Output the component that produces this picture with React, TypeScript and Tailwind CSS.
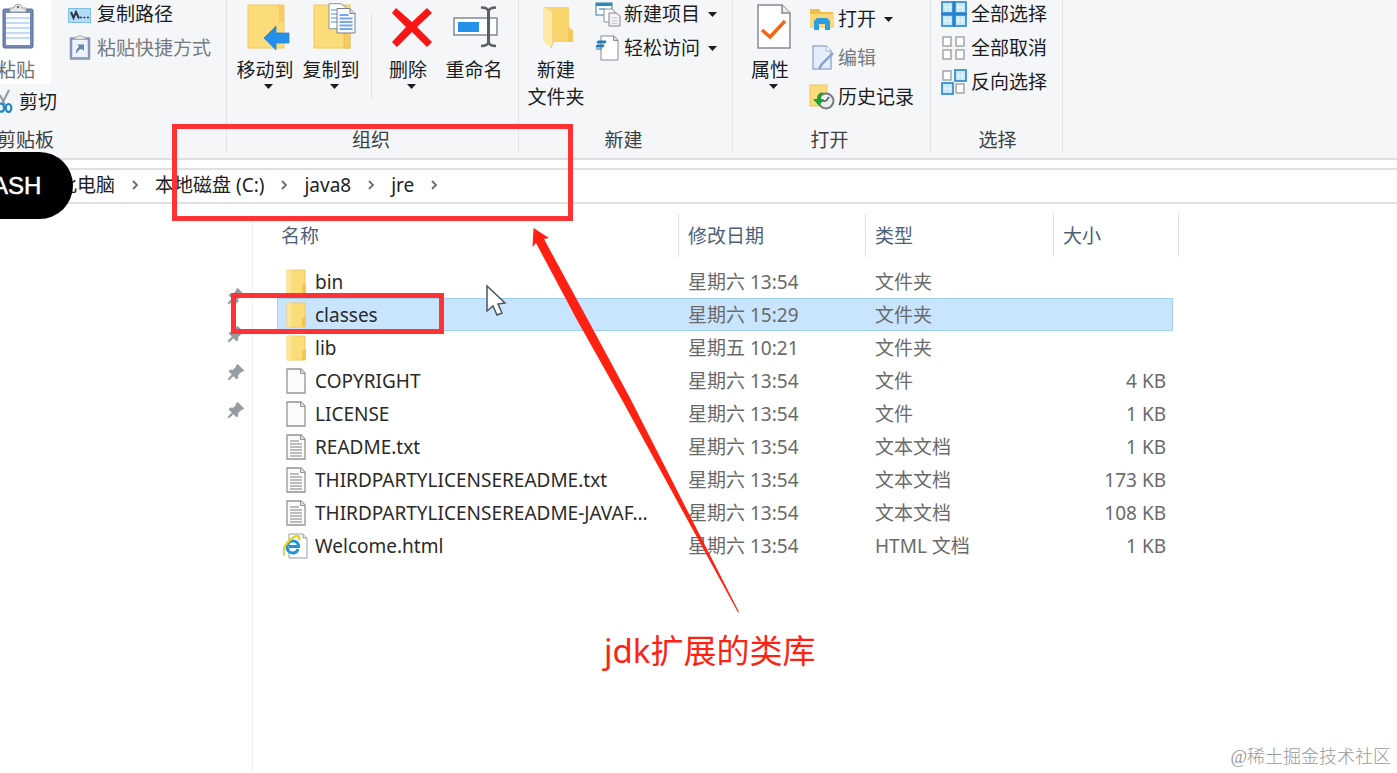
import type { ReactNode } from "react";
import { BsPinAngleFill } from "react-icons/bs";

/* ---------- ribbon icons ---------- */

const ClipboardIcon = () => (
  <svg width="32" height="47" viewBox="0 0 32 47" aria-hidden="true">
    <rect x="1" y="6" width="30" height="39" rx="1.5" fill="#7388b5" stroke="#566c9c" />
    <rect x="4" y="10" width="24" height="32" fill="#fafcff" />
    <path d="M4 15h24M4 20h24M4 25h24M4 30h24M4 35h24" stroke="#c3dbf5" strokeWidth="2" />
    <path d="M8 9V5h4c0-5 8-5 8 0h4v4z" fill="#e8e9ea" stroke="#9c9fa3" />
    <circle cx="16" cy="4" r="1.3" fill="#777" />
  </svg>
);

const ScissorsIcon = () => (
  <svg width="13" height="26" viewBox="0 0 13 26" className="shrink-0" aria-hidden="true">
    <path d="M9 1 2 15M0 6l5 10" stroke="#9199a1" strokeWidth="2" fill="none" />
    <ellipse cx="8.500" cy="19" rx="2.800" ry="4" fill="none" stroke="#1d87c9" strokeWidth="2.200" />
    <path d="M-1 15c3-1 5 0 5 4s-2 4-5 3" fill="none" stroke="#1d87c9" strokeWidth="2.200" />
  </svg>
);

const CopyPathIcon = () => (
  <svg width="24" height="24" viewBox="0 0 24 24" aria-hidden="true">
    <rect x=".5" y="6.500" width="22" height="14" fill="#b5dcf6" stroke="#7fbce6" />
    <path d="M3 10l2.500 6L8 10l3 6.500" stroke="#27384a" strokeWidth="2" fill="none" />
    <path d="M12 15.500h2M15.500 15.500h2M19 15.500h2" stroke="#27384a" strokeWidth="1.500" />
  </svg>
);

const PasteShortcutIcon = () => (
  <svg width="24" height="26" viewBox="0 0 24 26" aria-hidden="true">
    <rect x="3" y="3.500" width="18" height="20" fill="#edf3fb" stroke="#8797ba" strokeWidth="2.500" />
    <path d="M7 4.500V2h3c0-2 4-2 4 0h3v2.500z" fill="#e4e6e8" stroke="#a6abb3" />
    <path d="M8 18c0-3 1-5 3-6L9.500 9.500H16V16l-2-2c-2 0-4 1-5 4z" fill="#6a84b5" />
  </svg>
);

const MoveToIcon = () => (
  <svg width="44" height="48" viewBox="0 0 44 48" aria-hidden="true">
    <rect x="1" y="2" width="36" height="43" fill="#fbdc78" stroke="#efc95e" />
    <path d="M32 2h5v17h-5z" fill="#f4ca62" />
    <path d="M17 35l12-12v7h13v10H29v7z" fill="#2490ea" stroke="#2280cf" strokeWidth=".7" />
  </svg>
);

const CopyToIcon = () => (
  <svg width="44" height="48" viewBox="0 0 44 48" aria-hidden="true">
    <rect x="1" y="2" width="36" height="43" fill="#fbdc78" stroke="#efc95e" />
    <path d="M31 24h6v21h-6z" fill="#f4cd66" stroke="#e2b647" strokeWidth=".7" />
    <path d="M16 .7h12l5 4v21H16z" fill="#fff" stroke="#8f949b" />
    <path d="M18 7h8M18 11h8M18 15h8M18 19h8" stroke="#90b5e9" strokeWidth="1.500" />
    <path d="M24 5.500h13l5 5V30H24z" fill="#f7fbff" stroke="#7a7e84" />
    <path d="M37 5.500v5h5" fill="#ddd" stroke="#7a7e84" />
    <path d="M26.500 12h9M26.500 15.500h13M26.500 19h13M26.500 22.500h13M26.500 26h13" stroke="#7aa7e8" strokeWidth="1.800" />
  </svg>
);

const DeleteIcon = () => (
  <svg width="42" height="48" viewBox="0 0 42 48" aria-hidden="true">
    <path d="M5 5l16 14L36 5l5 5-15 14 15 15-5 5-15-15L6 44l-5-5 14-15L1 10z" fill="#f81515" />
  </svg>
);

const RenameIcon = () => (
  <svg width="46" height="48" viewBox="0 0 46 48" aria-hidden="true">
    <rect x="1" y="15" width="43" height="17" fill="#fff" stroke="#858b91" strokeWidth="1.500" />
    <rect x="5" y="19" width="21" height="10" fill="#2491ea" />
    <path d="M35.500 7v34" stroke="#5b6065" strokeWidth="3" />
    <path d="M28 4.500c5 0 7 1 7.500 4 .5-3 2.500-4 7.500-4M28 43c5 0 7-1 7.500-4 .5 3 2.500 4 7.500 4" fill="none" stroke="#5b6065" strokeWidth="2.500" />
  </svg>
);

const NewFolderIcon = () => (
  <svg width="32" height="44" viewBox="0 0 32 44" aria-hidden="true">
    <path d="M2 2h25v21l4 3v11H9z" fill="#f9d36c" />
    <path d="M27 22l4 4v11h-5V23z" fill="#f6c95a" />
    <path d="M1 2l10 5v30l-2 6-8-7z" fill="#ffe9a6" />
    <path d="M11 7v30l-2 6" fill="none" stroke="#f1c75d" />
  </svg>
);

const NewItemIcon = () => (
  <svg width="26" height="26" viewBox="0 0 26 26" aria-hidden="true">
    <rect x="1" y="2" width="16" height="12" fill="#fff" stroke="#2f7fa8" />
    <path d="M1 3.500h16" stroke="#2f8abb" strokeWidth="3" />
    <path d="M4 8h6" stroke="#74bde4" strokeWidth="2" />
    <path d="M9 8h8l3 3v10H9z" fill="#fff" stroke="#8a8f95" />
    <path d="M14 12h7l4 3v10H14z" fill="#f3f5f9" stroke="#8a8088" />
    <path d="M16.500 17h6M16.500 20h6M16.500 22.500h6" stroke="#bfc7e0" />
  </svg>
);

const EasyAccessIcon = () => (
  <svg width="26" height="26" viewBox="0 0 26 26" aria-hidden="true">
    <path d="M6 1h13l4 4v20H6z" fill="#fff" stroke="#858b93" />
    <path d="M18.500 1v4.500H23" fill="#d6d8da" stroke="#858b93" />
    <path d="M3 6h8l-1 2H2zM2 10h7l-1 2H1zM1 14h6" fill="#2679bb" stroke="#2679bb" />
  </svg>
);

const PropertiesIcon = () => (
  <svg width="34" height="46" viewBox="0 0 34 46" aria-hidden="true">
    <path d="M1 1h24l8 8v35H1z" fill="#fff" stroke="#878a8e" strokeWidth="1.500" />
    <path d="M25 1v8h8" fill="#eceded" stroke="#878a8e" strokeWidth="1.500" />
    <path d="M5 26l8 7 15-16" fill="none" stroke="#f36618" strokeWidth="3.500" />
  </svg>
);

const OpenIcon = () => (
  <svg width="26" height="26" viewBox="0 0 26 26" aria-hidden="true">
    <path d="M1 3h9l2 3h12v4H1z" fill="#f0bf45" />
    <path d="M1 8h24v14H1z" fill="#fbd978" />
    <path d="M5 24v-9l3-3h10l3 3v9h-5v-6h-6v6z" fill="#2a9ee3" />
  </svg>
);

const EditIcon = () => (
  <svg width="26" height="28" viewBox="0 0 26 28" aria-hidden="true">
    <path d="M4 2h13l5 5v18H4z" fill="#e4edfa" stroke="#9eafce" strokeWidth="1.500" />
    <path d="M17 2v5h5" fill="#fff" stroke="#9eafce" />
    <path d="M24 9L13 20l-3 5" stroke="#8da4c9" strokeWidth="2.500" fill="none" />
  </svg>
);

const HistoryIcon = () => (
  <svg width="26" height="26" viewBox="0 0 26 26" aria-hidden="true">
    <path d="M1 1h17v21H1z" fill="#fbdc78" stroke="#eac65b" />
    <circle cx="17" cy="17" r="7.500" fill="#eceeef" stroke="#777c81" strokeWidth="2" />
    <path d="M17 17l3-4M17 17h-4" stroke="#555" strokeWidth="1.500" />
    <path d="M14 8C9 9 8 12 8 15H4l6 7 5-7h-3c0-3 1-4 2-7z" fill="#21a038" />
  </svg>
);

type SquareTone = "on" | "off";

const squareLayout: [number, number][] = [
  [1, 1],
  [14, 1],
  [1, 14],
  [14, 14],
];

const SelectionIcon = ({ tones }: { tones: SquareTone[] }) => (
  <svg width="26" height="26" viewBox="0 0 26 26" aria-hidden="true">
    {squareLayout.map(([x, y], i) =>
      tones[i] === "on" ? (
        <g key={i}>
          <rect x={x} y={y} width="11" height="11" fill="#c5e7fd" stroke="#3a90d4" strokeWidth="1.800" />
          <path d={`M${x + 3.5} ${y + 2}v7M${x + 7.5} ${y + 2}v7M${x + 2} ${y + 5.5}h7`} stroke="#e8f7ff" />
        </g>
      ) : (
        <rect key={i} x={x + 1} y={y + 1} width="8" height="9" fill="#fff" stroke="#969a9e" strokeWidth="1.300" />
      ),
    )}
    {tones.every((tone) => tone === "on") && <path d="M13 0v26M0 13h26" stroke="#2482cd" strokeWidth="2" />}
  </svg>
);

/* ---------- ribbon parts ---------- */

const Caret = () => (
  <svg width="9" height="5" viewBox="0 0 9 5" aria-hidden="true">
    <path d="M0 0h9L4.500 5z" fill="#1c1c1c" />
  </svg>
);

function BigButton({ icon, lines, caret }: { icon: ReactNode; lines: string[]; caret?: boolean }) {
  return (
    <button type="button" className="flex w-[66px] shrink-0 flex-col items-center">
      <span className={`flex h-[57px] items-center justify-center pb-1 ${caret ? "pl-2" : "pl-1"}`}>{icon}</span>
      {lines.map((line) => (
        <span key={line} className="whitespace-nowrap leading-[27px]">
          {line}
        </span>
      ))}
      {caret && (
        <span className="pl-[7px]">
          <Caret />
        </span>
      )}
    </button>
  );
}

function SmallButton({
  icon,
  label,
  caret,
  disabled,
  roomy,
}: {
  icon: ReactNode;
  label: string;
  caret?: boolean;
  disabled?: boolean;
  roomy?: boolean;
}) {
  return (
    <button
      type="button"
      disabled={disabled}
      className={`flex h-7 items-center whitespace-nowrap disabled:text-[#777a7e] ${roomy ? "gap-1" : "gap-[3px]"}`}
    >
      <span className="flex w-[26px] shrink-0 justify-center">{icon}</span>
      <span>{label}</span>
      {caret && (
        <span className="pl-[5px]">
          <Caret />
        </span>
      )}
    </button>
  );
}

function Group({ label, className, children }: { label: string; className: string; children: ReactNode }) {
  return (
    <section aria-label={label} className={`flex shrink-0 flex-col border-r border-[#e2e4e6] ${className}`}>
      <div className="flex h-[125px]">{children}</div>
      <div className="h-7 pr-2 text-center leading-[30px] text-[#3c3f43]">{label}</div>
    </section>
  );
}

function Ribbon() {
  return (
    <header className="flex h-[160px] overflow-hidden border-b-2 border-[#dcdee0] bg-[#f4f6f8] pb-[5px] text-[#1a1c1f]">
      <section aria-label="剪贴板" className="flex w-[227px] shrink-0 flex-col border-r border-[#e2e4e6]">
        <div className="flex h-[125px] gap-[10px]">
          <div className="flex w-[57px] shrink-0 flex-col items-start">
            <button type="button" className="flex h-[84px] w-[51px] flex-col items-start bg-white text-[#6d7074]">
              <span className="flex h-[57px] items-center pb-1 pl-[2px]">
                <ClipboardIcon />
              </span>
              <span className="-ml-[3px] leading-[27px]">粘贴</span>
            </button>
            <button type="button" className="flex h-[35px] items-center gap-[6px] whitespace-nowrap">
              <ScissorsIcon />
              剪切
            </button>
          </div>
          <div className="flex flex-col items-start gap-[6px]">
            <SmallButton icon={<CopyPathIcon />} label="复制路径" roomy />
            <SmallButton icon={<PasteShortcutIcon />} label="粘贴快捷方式" disabled roomy />
          </div>
        </div>
        <div className="-ml-[3px] h-7 leading-[30px] text-[#3c3f43]">剪贴板</div>
      </section>

      <Group label="组织" className="w-[292px] pl-[5px]">
        <BigButton icon={<MoveToIcon />} lines={["移动到"]} caret />
        <BigButton icon={<CopyToIcon />} lines={["复制到"]} caret />
        <div className="ml-[7px] mr-[3px] mt-[14px] h-[86px] w-px shrink-0 bg-[#dfe1e3]" />
        <BigButton icon={<DeleteIcon />} lines={["删除"]} caret />
        <BigButton icon={<RenameIcon />} lines={["重命名"]} />
      </Group>

      <Group label="新建" className="w-[214px] pl-1">
        <BigButton icon={<NewFolderIcon />} lines={["新建", "文件夹"]} />
        <div className="flex flex-col items-start gap-[6px] pl-[6px]">
          <SmallButton icon={<NewItemIcon />} label="新建项目" caret />
          <SmallButton icon={<EasyAccessIcon />} label="轻松访问" caret />
        </div>
      </Group>

      <Group label="打开" className="w-[198px] pl-1">
        <BigButton icon={<PropertiesIcon />} lines={["属性"]} caret />
        <div className="flex flex-col items-start gap-[11px] pl-[6px] pt-[5px]">
          <SmallButton icon={<OpenIcon />} label="打开" caret />
          <SmallButton icon={<EditIcon />} label="编辑" disabled />
          <SmallButton icon={<HistoryIcon />} label="历史记录" />
        </div>
      </Group>

      <Group label="选择" className="w-[132px] pl-[10px]">
        <div className="flex flex-col items-start gap-[6px]">
          <SmallButton icon={<SelectionIcon tones={["on", "on", "on", "on"]} />} label="全部选择" roomy />
          <SmallButton icon={<SelectionIcon tones={["off", "off", "off", "off"]} />} label="全部取消" roomy />
          <SmallButton icon={<SelectionIcon tones={["off", "on", "on", "off"]} />} label="反向选择" roomy />
        </div>
      </Group>
    </header>
  );
}

/* ---------- address bar ---------- */

const crumbs = ["此电脑", "本地磁盘 (C:)", "java8", "jre"];

function AddressBar() {
  return (
    <nav
      aria-label="地址"
      className="mt-2 flex h-[36px] items-center border-y-2 border-[#e0e0e0] pb-[2px] pl-[58px] text-[#222]"
    >
      {crumbs.map((crumb) => (
        <span key={crumb} className="flex items-center">
          <a href="#" className="whitespace-nowrap">
            {crumb}
          </a>
          <svg width="8" height="10" viewBox="0 0 8 10" className="mx-4" aria-hidden="true">
            <path d="M2 1l4 4-4 4" fill="none" stroke="#6d6d6d" strokeWidth="1.800" />
          </svg>
        </span>
      ))}
    </nav>
  );
}

/* ---------- file list ---------- */

type FileKind = "folder" | "blank" | "text" | "html";

function FileIcon({ kind }: { kind: FileKind }) {
  if (kind === "folder") {
    return (
      <svg width="26" height="26" viewBox="0 0 26 26" aria-hidden="true">
        <path d="M4 1h18v24H4z" fill="#fbdc7b" stroke="#f0cb60" />
        <path d="M19 16l4-2v11h-4z" fill="#f5c64f" />
        <path d="M4 1h4v24H4z" fill="#fde596" />
      </svg>
    );
  }
  if (kind === "html") {
    return (
      <svg width="26" height="26" viewBox="0 0 26 26" aria-hidden="true">
        <path d="M6 1h14l4 4v20H6z" fill="#fff" stroke="#9a9da0" />
        <path d="M20 1v4h4" fill="#e9e9e9" stroke="#9a9da0" />
        <path d="M15 16c-1 3-3 4-5 4-3.500 0-6-2.500-6-6s2.500-6 6-6 5.500 2.300 5.500 5.500H6" fill="none" stroke="#1e93dc" strokeWidth="3" />
        <path d="M2 22c-5-3 2-14 9-18 4-2 6-1 5 3" fill="none" stroke="#e8d02d" strokeWidth="2.500" />
      </svg>
    );
  }
  return (
    <svg width="26" height="26" viewBox="0 0 26 26" aria-hidden="true">
      <path d="M4 1h14l4 4v20H4z" fill="#fbfbfb" stroke="#929496" strokeWidth="1.300" />
      <path d="M17.500 1v4.500H22" fill="#e2e2e2" stroke="#929496" />
      {kind === "text" && (
        <path d="M7 7h9M7 10h12M7 13h12M7 16h12M7 19h12M7 22h12" stroke="#a6a8aa" strokeWidth="1.300" />
      )}
    </svg>
  );
}

interface FileRow {
  name: string;
  kind: FileKind;
  modified: string;
  type: string;
  size?: string;
  selected?: boolean;
}

const files: FileRow[] = [
  { name: "bin", kind: "folder", modified: "星期六 13:54", type: "文件夹" },
  { name: "classes", kind: "folder", modified: "星期六 15:29", type: "文件夹", selected: true },
  { name: "lib", kind: "folder", modified: "星期五 10:21", type: "文件夹" },
  { name: "COPYRIGHT", kind: "blank", modified: "星期六 13:54", type: "文件", size: "4 KB" },
  { name: "LICENSE", kind: "blank", modified: "星期六 13:54", type: "文件", size: "1 KB" },
  { name: "README.txt", kind: "text", modified: "星期六 13:54", type: "文本文档", size: "1 KB" },
  { name: "THIRDPARTYLICENSEREADME.txt", kind: "text", modified: "星期六 13:54", type: "文本文档", size: "173 KB" },
  { name: "THIRDPARTYLICENSEREADME-JAVAF...", kind: "text", modified: "星期六 13:54", type: "文本文档", size: "108 KB" },
  { name: "Welcome.html", kind: "html", modified: "星期六 13:54", type: "HTML 文档", size: "1 KB" },
];

const columns = ["名称", "修改日期", "类型", "大小"];

function FileTable() {
  return (
    <table className="w-[902px] table-fixed border-collapse text-left">
      <colgroup>
        <col />
        <col className="w-[187px]" />
        <col className="w-[188px]" />
        <col className="w-[125px]" />
      </colgroup>
      <thead>
        <tr>
          {columns.map((column, i) => (
            <th key={column} scope="col" className="p-0 font-normal text-[#4d5f78]">
              <div
                className={`mb-2 flex h-[43px] items-center border-r border-[#dfe1e3] ${i === 0 ? "pl-1" : "pl-[9px]"}`}
              >
                {column}
              </div>
            </th>
          ))}
        </tr>
      </thead>
      <tbody className="text-[#6a6a6a]">
        {files.map((file) => {
          const fill = file.selected ? "border-[#9fd0f8] bg-[#c9e5fe]" : "border-transparent";
          return (
            <tr key={file.name} aria-selected={file.selected ?? false}>
              <td className="p-0">
                <div className={`flex h-[33px] items-center gap-[6px] border-y border-l pl-[5px] text-[#2a2a2a] ${fill}`}>
                  <FileIcon kind={file.kind} />
                  <span className="whitespace-nowrap">{file.name}</span>
                </div>
              </td>
              <td className="p-0">
                <div className={`flex h-[33px] items-center whitespace-nowrap border-y pl-[9px] ${fill}`}>
                  {file.modified}
                </div>
              </td>
              <td className="p-0">
                <div className={`flex h-[33px] items-center whitespace-nowrap border-y pl-[9px] ${fill}`}>
                  {file.type}
                </div>
              </td>
              <td className="p-0">
                <div
                  className={`mr-[6px] flex h-[33px] items-center justify-end whitespace-nowrap border-y border-r pr-[6px] ${fill}`}
                >
                  {file.size}
                </div>
              </td>
            </tr>
          );
        })}
      </tbody>
    </table>
  );
}

function QuickAccess() {
  return (
    <aside className="mt-3 flex w-[253px] shrink-0 flex-col items-end border-r border-[#f0f0f0] pr-2 pt-[61px]">
      {[0, 1, 2, 3].map((n) => (
        <span key={n} className="flex h-[38px] items-center text-[#969ca1]">
          <BsPinAngleFill size={17} strokeWidth={1} aria-hidden="true" />
        </span>
      ))}
    </aside>
  );
}

/* ---------- marks drawn over the window ---------- */

function Annotations() {
  return (
    <div className="pointer-events-none absolute inset-0 overflow-hidden">
      <div className="absolute left-0 top-[152px] flex h-[67px] w-[73px] items-center rounded-r-full bg-black">
        <span className="-ml-[8px] font-['Liberation_Sans'] text-[24px] leading-none text-white [-webkit-text-stroke:0.5px_white]">
          ASH
        </span>
      </div>
      <div className="absolute left-[172px] top-[124px] h-[97px] w-[401px] border-5 border-[#ff3333]" />
      <div className="absolute left-[231px] top-[293px] h-[41px] w-[213px] border-5 border-[#ff3333]" />
      <svg className="absolute left-[532px] top-[228px]" width="208" height="386" viewBox="0 0 208 386" aria-hidden="true">
        <path d="M1.500 0L17 10l-5 1 44 81 42 78L207 384l-1 .5L90 172 45 92 4 15 .5 19z" fill="#ff2212" />
      </svg>
      <svg className="absolute left-[485px] top-[284px]" width="22" height="34" viewBox="0 0 22 34" aria-hidden="true">
        <path d="M2 2v25l6-5 4 9 5-2-4-9 7-1z" fill="#fff" stroke="#4c5660" strokeWidth="1.500" />
      </svg>
      <p className="absolute left-[604px] top-[627px] whitespace-nowrap text-[33px] leading-[48px] text-[#ff2212]">
        jdk扩展的类库
      </p>
      <p className="absolute bottom-0 right-[6px] whitespace-nowrap font-['Liberation_Serif','Noto_Sans_CJK_SC',serif] text-[18px] font-light leading-8 text-[#999]">
        @稀土掘金技术社区
      </p>
    </div>
  );
}

export default function App() {
  return (
    <div className="relative flex min-h-screen flex-col overflow-hidden bg-white font-['Noto_Sans','Noto_Sans_CJK_SC',sans-serif] text-[19px] leading-7">
      <Ribbon />
      <AddressBar />
      <main className="flex flex-1">
        <QuickAccess />
        <div className="pl-6 pt-[10px]">
          <FileTable />
        </div>
      </main>
      <Annotations />
    </div>
  );
}
